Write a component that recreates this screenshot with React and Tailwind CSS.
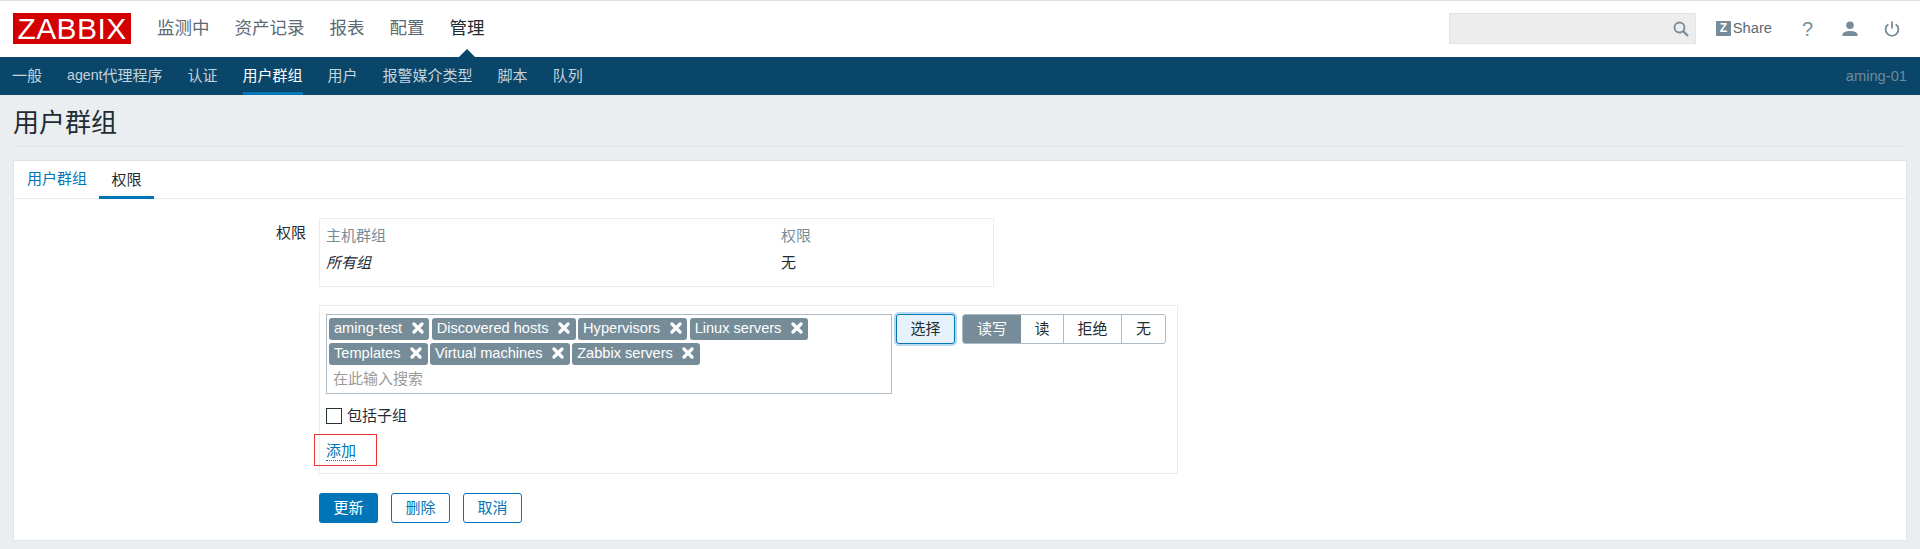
const menu = [
  { label: "监测中" },
  { label: "资产记录" },
  { label: "报表" },
  { label: "配置" },
  { label: "管理", active: true },
];

const subMenu = [
  { label: "一般" },
  { label: "代理程序", prefix: "agent" },
  { label: "认证" },
  { label: "用户群组", active: true },
  { label: "用户" },
  { label: "报警媒介类型" },
  { label: "脚本" },
  { label: "队列" },
];

const chips = [
  "aming-test",
  "Discovered hosts",
  "Hypervisors",
  "Linux servers",
  "Templates",
  "Virtual machines",
  "Zabbix servers",
];

const Chip = ({ label }) => (
  <span className="flex h-[22px] items-center rounded-[3px] bg-[#768d99] pl-[5px] pr-[5.5px] text-[14.6px] text-white">
    {label}
    <svg viewBox="0 0 12 12" className="ml-[9.5px] h-[12px] w-[12px] -translate-y-px">
      <path d="M2 2 L10 10 M10 2 L2 10" stroke="#ffffff" strokeWidth="3.2" strokeLinecap="round" />
    </svg>
  </span>
);

export default function App() {
  return (
    <div className="flex h-[549px] flex-col overflow-hidden bg-[#ebeef0] text-[15px] text-[#1f2c33] [font-family:'Liberation_Sans','Noto_Sans_CJK_SC',sans-serif]">
      <header className="flex h-[57px] shrink-0 items-center border-t border-[#e0e0e0] bg-white pb-px">
        <div className="ml-[13px] flex h-[31px] w-[118px] items-center justify-center bg-[#d40000] text-[30px] tracking-[0.4px] text-white">
          ZABBIX
        </div>
        <nav className="ml-[26px] flex gap-[25px] text-[17.5px]">
          {menu.map((item) => (
            <a key={item.label} className={`relative ${item.active ? "text-[#1f2c33]" : "text-[#5b6a73]"}`}>
              {item.label}
              {item.active && (
                <span className="absolute left-1/2 top-[34px] h-0 w-0 -translate-x-1/2 border-x-[9px] border-b-[9px] border-x-transparent border-b-[#0a466a]" />
              )}
            </a>
          ))}
        </nav>
        <div className="ml-auto flex h-[31px] w-[247px] items-center justify-end border border-[#e3e3e3] bg-[#ededed] pr-[6px]">
          <svg viewBox="0 0 16 16" className="h-[16px] w-[16px]" fill="none" stroke="#768d99" strokeWidth="1.8">
            <circle cx="6.5" cy="6.5" r="5" />
            <path d="M10.2 10.2 L15 15" strokeWidth="2.2" />
          </svg>
        </div>
        <div className="ml-[20px] flex items-center text-[#5b6a73]">
          <span className="flex h-[15px] w-[15px] items-center justify-center rounded-[1px] bg-[#768d99] text-[12px] font-bold text-white">
            Z
          </span>
          <span className="ml-[2px] text-[14.7px]">Share</span>
        </div>
        <span className="ml-[30px] w-[10px] text-center text-[20px] text-[#768d99]">?</span>
        <svg viewBox="0 0 16 16" className="ml-[30px] h-[16px] w-[16px]" fill="#768d99">
          <circle cx="8" cy="4.2" r="3.8" />
          <path d="M0.5 15 V13.5 C0.5 11.5 4 10 8 10 C12 10 15.5 11.5 15.5 13.5 V15 Z" />
        </svg>
        <svg viewBox="0 0 16 16" className="ml-[26px] mr-[20px] h-[16px] w-[16px]" fill="none" stroke="#768d99" strokeWidth="1.8">
          <path d="M4.3 3.2 A6.4 6.4 0 1 0 11.7 3.2" />
          <path d="M8 0.5 V7.5" />
        </svg>
      </header>

      <div className="flex h-[38px] shrink-0 items-stretch justify-between bg-[#0a466a] pl-[12px] pr-[13px]">
        <nav className="flex gap-[25px]">
          {subMenu.map((item) => (
            <a
              key={item.label}
              className={`flex items-center border-y-[3px] border-t-transparent ${
                item.active ? "border-b-[#0275b8] text-white" : "border-b-transparent text-[#c5d3db]"
              }`}
            >
              {item.prefix && <span className="text-[14.2px]">{item.prefix}</span>}
              {item.label}
            </a>
          ))}
        </nav>
        <span className="flex items-center text-[14.7px] text-[#6f8a99]">aming-01</span>
      </div>

      <main className="flex flex-1 flex-col px-[13px]">
        <div className="flex h-[52px] shrink-0 items-center border-b border-[#dfe4e7] pt-[4px]">
          <h1 className="text-[26px] font-normal leading-none">用户群组</h1>
        </div>

        <section className="mt-[13px] flex h-[381px] shrink-0 flex-col border border-[#dfe4e7] bg-white">
          <div className="flex h-[38px] shrink-0 items-stretch border-b border-[#ebeef0] pl-px">
            <a className="flex items-center px-[12px] text-[#0275b8]">用户群组</a>
            <a className="-mb-px flex items-center border-y-[3px] border-t-transparent border-b-[#0275b8] px-[12.5px]">权限</a>
          </div>

          <div className="flex pt-[19px]">
            <div className="w-[292px] shrink-0 pt-[5px] text-right leading-[20px]">权限</div>
            <div className="ml-[13px] flex flex-col">
              <div className="h-[69px] w-[675px] border border-[#ebeef0] px-[6px]">
                <div className="grid grid-cols-[455px_1fr] pt-[7px] leading-[20px] text-[#768d99]">
                  <span>主机群组</span>
                  <span>权限</span>
                </div>
                <div className="mt-[7px] grid grid-cols-[455px_1fr] leading-[20px]">
                  <em>所有组</em>
                  <span>无</span>
                </div>
              </div>

              <div className="relative mt-[18px] h-[169px] w-[859px] border border-[#ebeef0] pl-[6px] pt-[8px]">
                <div className="flex items-start">
                  <div className="h-[80px] w-[566px] border border-[#acbbc5] p-[3px] pl-[2px]">
                    <div className="flex flex-wrap gap-x-[2.5px] gap-y-[3px]">
                      {chips.map((chip) => (
                        <Chip key={chip} label={chip} />
                      ))}
                    </div>
                    <div className="mt-[3px] pl-[4px] leading-[22px] text-[#9a9a9a]">在此输入搜索</div>
                  </div>
                  <button className="ml-[4px] flex h-[30px] w-[59px] items-center justify-center rounded-[3px] border border-[#0275b8] bg-[#e5f2fb] shadow-[0_0_0_2px_#b9d9f1]">
                    选择
                  </button>
                  <div className="ml-[7px] flex h-[30px] overflow-hidden rounded-[3px] border border-[#acbbc5]">
                    <span className="flex w-[58px] items-center justify-center bg-[#768d99] text-white">读写</span>
                    <span className="flex w-[43px] items-center justify-center border-r border-[#acbbc5]">读</span>
                    <span className="flex w-[58px] items-center justify-center border-r border-[#acbbc5]">拒绝</span>
                    <span className="flex w-[43px] items-center justify-center">无</span>
                  </div>
                </div>

                <label className="mt-[14px] flex items-center">
                  <span className="h-[16px] w-[16px] border border-[#2a353a]" />
                  <span className="ml-[5px] leading-[16px]">包括子组</span>
                </label>

                <a className="mt-[17px] block w-fit border-b border-dotted border-[#0275b8] leading-[19px] text-[#0275b8]">添加</a>

                <div className="absolute left-[-6px] top-[128px] h-[32px] w-[63px] border border-[#f03030]" />
              </div>

              <div className="mt-[19px] flex gap-[13px]">
                <button className="h-[30px] w-[59px] rounded-[3px] bg-[#0275b8] text-white">更新</button>
                <button className="h-[30px] w-[59px] rounded-[3px] border border-[#0275b8] text-[#0275b8]">删除</button>
                <button className="h-[30px] w-[59px] rounded-[3px] border border-[#0275b8] text-[#0275b8]">取消</button>
              </div>
            </div>
          </div>
        </section>
      </main>
    </div>
  );
}
